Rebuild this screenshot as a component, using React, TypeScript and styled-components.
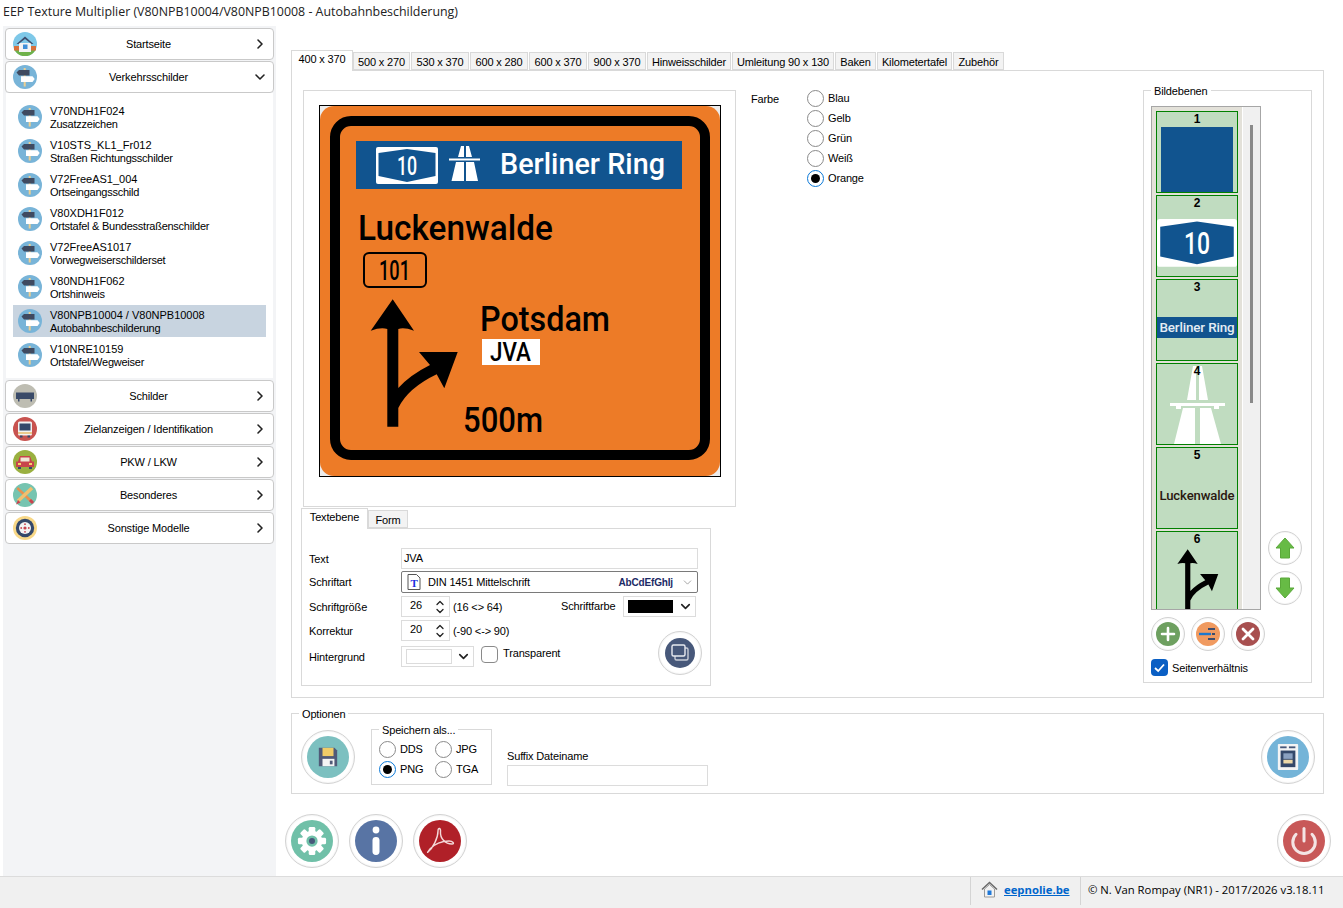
import React from 'react';
import styled, { createGlobalStyle } from 'styled-components';
import { ChevronDown, ChevronRight, ChevronUp, Power } from 'lucide-react';

const GlobalStyle = createGlobalStyle`
  html, body { margin: 0; padding: 0; background: #fff; }
  body { font-family: "Liberation Sans", Arial, sans-serif; font-size: 11px; letter-spacing: -0.15px; color: #000; }
  * { box-sizing: border-box; }
`;

const Page = styled.div`
  width: 1343px;
  height: 908px;
  display: flex;
  flex-direction: column;
  overflow: hidden;
  background: #fff;
`;

const TitleBar = styled.div`
  height: 26px;
  flex: none;
  padding: 4px 0 0 3px;
  font-family: "Open Sans", sans-serif;
  font-size: 12.4px;
  letter-spacing: 0;
  line-height: 16px;
  color: #222;
`;

const Body = styled.div`
  flex: 1;
  display: flex;
  min-height: 0;
  padding-left: 3px;
`;

const Sidebar = styled.aside`
  width: 273px;
  flex: none;
  background: #f3f4f6;
  padding: 2px;
  display: flex;
  flex-direction: column;
  gap: 1px;
`;

const NavButton = styled.div`
  height: 32px;
  flex: none;
  display: grid;
  grid-template-columns: 32px 1fr 21px;
  align-items: center;
  background: #fff;
  border: 1px solid #c9c9c9;
  border-radius: 4px;
  padding-left: 7px;
  text-align: center;
  svg { display: block; }
`;

const SubMenu = styled.div`
  margin: -1px 1px 1px;
  background: #fff;
  padding: 8px 7px 7px;
  display: flex;
  flex-direction: column;
  gap: 2px;
`;

const SubItem = styled.div<{ $active?: boolean }>`
  height: 32px;
  display: flex;
  align-items: center;
  gap: 8px;
  padding-left: 5px;
  line-height: 13px;
  background: ${(p) => (p.$active ? '#c8d4e0' : 'transparent')};
`;

const SubText = styled.div`
  padding-top: 2px;
`;

const SubCode = styled.div`
  letter-spacing: 0;
`;

const SubName = styled.div`
  letter-spacing: -0.25px;
`;

const Main = styled.main`
  flex: 1;
  min-width: 0;
  padding: 24px 19px 0 15px;
  display: flex;
  flex-direction: column;
`;

const TabRow = styled.div`
  display: flex;
  height: 20px;
  align-items: flex-end;
  position: relative;
  z-index: 1;
`;

const Tab = styled.div<{ $active?: boolean; $w: number }>`
  width: ${(p) => p.$w}px;
  height: ${(p) => (p.$active ? 21 : 18)}px;
  margin-bottom: ${(p) => (p.$active ? -1 : 0)}px;
  margin-right: ${(p) => (p.$active ? 0 : 1)}px;
  text-align: center;
  line-height: ${(p) => (p.$active ? 17 : 18)}px;
  background: ${(p) => (p.$active ? '#fff' : '#f3f3f3')};
  border: 1px solid #d9d9d9;
  border-bottom: ${(p) => (p.$active ? 'none' : '1px solid #d9d9d9')};
  flex: none;
`;

const TabPanel = styled.section`
  height: 628px;
  flex: none;
  border: 1px solid #d9d9d9;
  padding: 19px 11px 0 9px;
  display: flex;
`;

const LeftColumn = styled.div`
  width: 435px;
  flex: none;
`;

const ImagePanel = styled.div`
  width: 433px;
  height: 417px;
  margin-left: 2px;
  border: 1px solid #d9d9d9;
  padding: 14px 0 0 15px;
  svg { display: block; }
`;

const SubTabRow = styled(TabRow)`
  margin-top: 1px;
`;

const TextPanel = styled.div`
  width: 410px;
  height: 158px;
  border: 1px solid #d9d9d9;
  padding: 19px 0 0 7px;
  display: grid;
  grid-template-columns: 92px 160px 137px;
  grid-template-rows: 23px 25px 24px 26px 29px;
`;

const FieldLabel = styled.div`
  line-height: 23px;
  height: 21px;
`;

const WideField = styled.div`
  grid-column: 2 / 4;
`;

const TextInput = styled.div<{ $w?: number }>`
  width: ${(p) => (p.$w ? `${p.$w}px` : '100%')};
  height: 21px;
  border: 1px solid #dcdcdc;
  line-height: 19px;
  padding-left: 2px;
`;

const FontSelect = styled.div`
  height: 22px;
  border: 1px solid #7a7a7a;
  border-radius: 2px;
  display: flex;
  align-items: center;
  padding: 0 3px 0 5px;
  svg { flex: none; display: block; }
`;

const FontName = styled.span`
  margin-left: 7px;
  flex: 1;
`;

const FontPreview = styled.span`
  font-size: 10px;
  font-weight: bold;
  color: #1c2a66;
  margin-right: 8px;
`;

const FlexCell = styled.div`
  display: flex;
  align-items: flex-start;
`;

const Spin = styled.div`
  width: 49px;
  height: 21px;
  border: 1px solid #dcdcdc;
  display: flex;
  align-items: center;
  justify-content: space-between;
  padding: 0 3px 0 8px;
  margin-right: 3px;
`;

const SpinValue = styled.span`
  margin-top: -3px;
`;

const SpinArrows = styled.div`
  display: flex;
  flex-direction: column;
  margin-top: 1px;
  svg { display: block; margin: -2px 0; }
`;

const HintText = styled.span`
  line-height: 23px;
`;

const ColorLabel = styled.span`
  line-height: 21px;
`;

const ColorCell = styled(FlexCell)`
  justify-content: space-between;
  padding-right: 2px;
`;

const ColorSelect = styled.div<{ $w: number }>`
  width: ${(p) => p.$w}px;
  height: 21px;
  border: 1px solid #dcdcdc;
  display: flex;
  align-items: center;
  justify-content: space-between;
  padding: 0 2px 0 4px;
  flex: none;
  svg { display: block; }
`;

const Swatch = styled.span<{ $w: number; $color: string }>`
  width: ${(p) => p.$w}px;
  height: ${(p) => (p.$color === '#000' ? 13 : 15)}px;
  background: ${(p) => p.$color};
  border: 1px solid ${(p) => (p.$color === '#000' ? '#000' : '#dcdcdc')};
`;

const CheckBoxOff = styled.span`
  width: 17px;
  height: 17px;
  border: 1px solid #8a8a8a;
  border-radius: 4px;
  margin: 0 5px 0 7px;
  flex: none;
`;

const CheckText = styled.span`
  line-height: 15px;
`;

const ButtonCell = styled.div`
  grid-column: 3;
  grid-row: 4 / 6;
  align-self: end;
  justify-self: end;
  margin-right: -4px;
`;

const FarbeColumn = styled.div`
  margin-left: 15px;
  display: flex;
  flex: none;
`;

const FarbeLabel = styled.div`
  width: 56px;
  padding-top: 3px;
`;

const RadioStack = styled.div`
  display: flex;
  flex-direction: column;
  gap: 3px;
`;

const RadioRow = styled.label`
  display: flex;
  align-items: center;
  gap: 4px;
  height: 17px;
`;

const RadioText = styled.span`
  margin-top: -2px;
`;

const RadioDot = styled.span<{ $on?: boolean }>`
  width: 17px;
  height: 17px;
  border-radius: 50%;
  border: 1px solid ${(p) => (p.$on ? '#0a78d7' : '#8a8a8a')};
  display: flex;
  align-items: center;
  justify-content: center;
  flex: none;
  &::after {
    content: "";
    width: 9px;
    height: 9px;
    border-radius: 50%;
    background: ${(p) => (p.$on ? '#000' : 'transparent')};
  }
`;

const Fieldset = styled.fieldset`
  margin: 0;
  padding: 0 0 0 7px;
  border: 1px solid #d9d9d9;
  min-width: 0;
`;

const Legend = styled.legend`
  padding: 0 3px;
  height: 13px;
  line-height: 15px;
`;

const LayersBox = styled(Fieldset)`
  margin: -6px 0 0 auto;
  width: 169px;
  height: 599px;
  flex: none;
`;

const LayersTop = styled.div`
  display: flex;
  margin-top: 9px;
`;

const LayerList = styled.div`
  width: 110px;
  height: 504px;
  border: 1px solid #a6a6a6;
  display: flex;
  overflow: hidden;
  flex: none;
`;

const LayerStrip = styled.div`
  width: 90px;
  flex: none;
  background: #e3e1d9;
  padding: 4px 0 0 4px;
  display: flex;
  flex-direction: column;
  gap: 2px;
`;

const Track = styled.div`
  flex: 1;
  border-left: 1px solid #fff;
  background: #f0f0f0;
  display: flex;
  justify-content: center;
  padding-top: 18px;
`;

const Thumb = styled.div`
  width: 3px;
  height: 278px;
  background: #8a8a8a;
`;

const LayerCardBox = styled.div`
  width: 82px;
  height: 82px;
  flex: none;
  position: relative;
  border: 1px solid #008000;
  background: #c0dcc0;
  svg { display: block; }
`;

const LayerNumber = styled.span`
  position: absolute;
  top: 0;
  left: 0;
  right: 0;
  text-align: center;
  font-size: 12px;
  font-weight: bold;
  line-height: 14px;
`;

const MoveButtons = styled.div`
  margin: 0 0 5px 7px;
  display: flex;
  flex-direction: column;
  justify-content: flex-end;
  gap: 6px;
`;

const ToolRow = styled.div`
  display: flex;
  gap: 6px;
  margin-top: 7px;
`;

const AspectRow = styled.div`
  display: flex;
  align-items: center;
  gap: 4px;
  margin-top: 8px;
`;

const CheckBoxOn = styled.span`
  width: 17px;
  height: 17px;
  border-radius: 4px;
  background: #0a5fc4;
  display: flex;
  align-items: center;
  justify-content: center;
`;

const OptionsBox = styled(Fieldset)`
  height: 87px;
  margin-top: 9px;
  flex: none;
`;

const OptionsRow = styled.div`
  display: flex;
  padding: 10px 8px 0 2px;
  align-items: flex-start;
`;

const SaveAsBox = styled(Fieldset)`
  width: 121px;
  height: 62px;
  margin: -7px 0 0 16px;
  flex: none;
`;

const SaveGrid = styled.div`
  display: grid;
  grid-template-columns: 56px 56px;
  row-gap: 3px;
  padding-top: 5px;
`;

const SuffixBlock = styled.div`
  margin: 20px 0 0 15px;
  line-height: 13px;
`;

const SuffixInput = styled(TextInput)`
  margin-top: 2px;
`;

const PushRight = styled.div`
  margin-left: auto;
`;

const ActionRow = styled.div`
  display: flex;
  gap: 10px;
  margin: 20px -7px 0 -6px;
`;

const StatusBar = styled.footer`
  height: 32px;
  flex: none;
  background: #f0f0f0;
  border-top: 1px solid #dcdcdc;
  display: flex;
  justify-content: flex-end;
  font-family: "Open Sans", sans-serif;
  font-size: 11.3px;
  letter-spacing: 0;
`;

const StatusCell = styled.div<{ $w: number; $pad: number }>`
  width: ${(p) => p.$w}px;
  height: 28px;
  border-left: 1px solid #d4d4d4;
  display: flex;
  align-items: center;
  gap: 6px;
  padding: 0 0 4px ${(p) => p.$pad}px;
  white-space: nowrap;
  svg { display: block; flex: none; }
`;

const StatusLink = styled.a`
  color: #0066cc;
  font-weight: bold;
  text-decoration: underline;
`;

const RoundShell = styled.div<{ $size: number; $inset: number; $color: string }>`
  width: ${(p) => p.$size}px;
  height: ${(p) => p.$size}px;
  flex: none;
  border-radius: 50%;
  border: 1px solid #d2d2d2;
  background: #fff;
  box-shadow: inset 0 0 2px #e4e4e4;
  padding: ${(p) => p.$inset}px;
  > div {
    width: 100%;
    height: 100%;
    border-radius: 50%;
    background: ${(p) => p.$color};
    display: flex;
    align-items: center;
    justify-content: center;
  }
  svg { display: block; }
`;

type RoundProps = { size: number; inset: number; color: string; children: React.ReactNode };

const RoundButton = ({ size, inset, color, children }: RoundProps) => (
  <RoundShell $size={size} $inset={inset} $color={color}>
    <div>{children}</div>
  </RoundShell>
);

const Signpost = () => (
  <svg width="24" height="24" viewBox="0 0 24 24">
    <circle cx="12" cy="12" r="12" fill="#78b4d8" />
    <rect x="10.7" y="3" width="2" height="18.5" fill="#eccf92" />
    <path d="M3.5 7.5 L6 5 H16.5 V10.5 H6 Z" fill="#3f4a60" />
    <path d="M8 11.3 H19.5 L21.7 14 L19.5 17 H8 Z" fill="#fff" />
  </svg>
);

const HomeIcon = () => (
  <svg width="24" height="24" viewBox="0 0 24 24">
    <circle cx="12" cy="12" r="12" fill="#7ec8e8" />
    <path d="M1.5 18 H22.5 A12 12 0 0 1 1.5 18 Z" fill="#6fb24a" />
    <rect x="1" y="14" width="22" height="4.5" fill="#d8703c" />
    <rect x="6" y="11" width="12" height="9" fill="#f4f4f4" />
    <path d="M3.5 12 L12 4.5 L20.5 12 L18.5 12 L12 7 L5.5 12 Z" fill="#3d4c6c" />
    <rect x="10" y="12.5" width="4.5" height="4.5" fill="#3f8fd8" />
  </svg>
);

const BoardIcon = () => (
  <svg width="24" height="24" viewBox="0 0 24 24">
    <circle cx="12" cy="12" r="12" fill="#bebdb2" />
    <rect x="3" y="8.5" width="18" height="6.5" fill="#3a4a68" />
    <rect x="5" y="15" width="1.5" height="2.5" fill="#3a4a68" />
    <rect x="17.5" y="15" width="1.5" height="2.5" fill="#3a4a68" />
  </svg>
);

const DisplayIcon = () => (
  <svg width="24" height="24" viewBox="0 0 24 24">
    <circle cx="12" cy="12" r="12" fill="#c85350" />
    <rect x="5" y="4.5" width="14" height="14" rx="1.5" fill="#f2f2f2" />
    <rect x="6.5" y="6.5" width="11" height="7" fill="#34486a" />
    <rect x="5" y="15" width="14" height="2" fill="#ecc98c" />
    <rect x="7" y="18.5" width="2.5" height="2" fill="#34486a" />
    <rect x="14.5" y="18.5" width="2.5" height="2" fill="#34486a" />
  </svg>
);

const CarIcon = () => (
  <svg width="24" height="24" viewBox="0 0 24 24">
    <circle cx="12" cy="12" r="12" fill="#9ab040" />
    <path d="M7 6 H17 L19 11.5 H21 V17 H3 V11.5 H5 Z" fill="#c8444c" />
    <rect x="7.5" y="7.5" width="9" height="4" fill="#f0e8d8" />
    <rect x="5" y="13" width="3" height="2" fill="#f4d468" />
    <rect x="16" y="13" width="3" height="2" fill="#f4d468" />
    <rect x="5" y="17" width="3" height="2" fill="#34486a" />
    <rect x="16" y="17" width="3" height="2" fill="#34486a" />
  </svg>
);

const ToolsIcon = () => (
  <svg width="24" height="24" viewBox="0 0 24 24">
    <circle cx="12" cy="12" r="12" fill="#76c4b0" />
    <path d="M5 4 L20 18 L18 20 L3.5 6 Z" fill="#e89050" />
    <path d="M19 5 L5 18" stroke="#f0c070" strokeWidth="3.5" />
    <path d="M5 17 L7.5 19.5 L3 21.5 Z" fill="#c84450" />
    <path d="M17 17 L20 20" stroke="#c84450" strokeWidth="3" />
  </svg>
);

const WheelIcon = () => (
  <svg width="24" height="24" viewBox="0 0 24 24">
    <circle cx="12" cy="12" r="12" fill="#f8d888" />
    <circle cx="12" cy="12" r="9.2" fill="#34486a" />
    <circle cx="12" cy="12" r="6" fill="#f4f4f4" />
    <circle cx="12" cy="12" r="1.6" fill="#c84450" />
    <circle cx="12" cy="8.2" r="0.9" fill="#c84450" />
    <circle cx="12" cy="15.8" r="0.9" fill="#c84450" />
    <circle cx="8.2" cy="12" r="0.9" fill="#c84450" />
    <circle cx="15.8" cy="12" r="0.9" fill="#c84450" />
  </svg>
);

const FontFileIcon = () => (
  <svg width="14" height="16" viewBox="0 0 14 16">
    <path d="M1 .5 H9.5 L13 4 V15.5 H1 Z" fill="#fff" stroke="#555" />
    <text x="7" y="12.5" textAnchor="middle" fontFamily="Liberation Serif, serif" fontWeight="bold" fontSize="11" fill="#1a2ee0">T</text>
  </svg>
);

const ARROW_PATH =
  'M392.7 299.3 L414 330.7 Q404 327 398.3 329 L398.3 388 Q410 375 430 365 L419 352 L457.7 352 L444.3 388.3 L436.7 374.3 Q408 388 398.3 408 L398.3 426.7 L387.3 426.7 L387.3 329 Q381 327 370.7 330.7 Z';

const Shield = () => (
  <g>
    <rect x="376" y="147" width="62" height="37" rx="2" fill="#fff" />
    <path d="M378.5 153 L407 149 L435.5 153 V176 L407 182 L378.5 176 Z" fill="#11548f" />
    <text x="407" y="174.5" textAnchor="middle" fontFamily="Roboto, sans-serif" fontWeight="500" fontSize="25" fill="#fff" textLength="20" lengthAdjust="spacingAndGlyphs">10</text>
  </g>
);

const SignText = styled.text`
  font-family: Roboto, "Liberation Sans", sans-serif;
  font-weight: 500;
  letter-spacing: 0;
`;

const SignImage = () => (
  <svg width="402" height="372" viewBox="319 105 402 372">
    <rect x="319" y="105" width="402" height="372" fill="#ececec" />
    <rect x="320" y="106" width="400" height="370" rx="14" fill="#ed7b27" />
    <rect x="335" y="121" width="370" height="334" rx="16" fill="none" stroke="#000" strokeWidth="10" />
    <rect x="356" y="141" width="326" height="48" fill="#11548f" />
    <Shield />
    <g fill="#fff">
      <path d="M461 146 H464 V157 H458 Z M466 146 H469 L472 157 H466 Z" />
      <rect x="449" y="158.5" width="31" height="2" />
      <path d="M456 162 H464 V181 H451.5 Z M466 162 H474 L478 181 H466 Z" />
    </g>
    <SignText x="500" y="174" fontSize="30" fill="#fff" textLength="165" lengthAdjust="spacingAndGlyphs">Berliner Ring</SignText>
    <SignText x="358" y="239.5" fontSize="35" textLength="195" lengthAdjust="spacingAndGlyphs">Luckenwalde</SignText>
    <rect x="364" y="253" width="62" height="34" rx="5" fill="none" stroke="#000" strokeWidth="2" />
    <SignText x="379" y="279.5" fontSize="27" textLength="31" lengthAdjust="spacingAndGlyphs">101</SignText>
    <path d={ARROW_PATH} fill="#000" />
    <SignText x="480" y="330.7" fontSize="35" textLength="130" lengthAdjust="spacingAndGlyphs">Potsdam</SignText>
    <rect x="482" y="339" width="58" height="26" fill="#fff" />
    <SignText x="490" y="361" fontSize="26" textLength="41" lengthAdjust="spacingAndGlyphs">JVA</SignText>
    <SignText x="463" y="431.7" fontSize="35" textLength="80" lengthAdjust="spacingAndGlyphs">500m</SignText>
    <rect x="319.5" y="105.5" width="401" height="371" fill="none" stroke="#000" />
  </svg>
);

const Thumbnail = ({ children }: { children: React.ReactNode }) => (
  <svg width="80" height="80" viewBox="0 0 80 80">{children}</svg>
);

const layers: React.ReactNode[] = [
  <rect key="a" x="4" y="15" width="72" height="65" fill="#11548f" />,
  <g key="b" transform="translate(0 23) scale(1.29) translate(-376 -147)"><Shield /></g>,
  <g key="c">
    <rect x="0" y="37" width="80" height="21" fill="#11548f" />
    <text x="40" y="52" textAnchor="middle" fontFamily="Roboto, sans-serif" fontWeight="500" fontSize="13" fill="#e4ecf4" textLength="75" lengthAdjust="spacingAndGlyphs">Berliner Ring</text>
  </g>,
  <g key="d" fill="#fff">
    <path d="M36 2 H39 V36 H30 Z M42 2 H45 L51 36 H42 Z" />
    <rect x="13" y="39" width="55" height="3" />
    <path d="M19 42 H24 V45 H19 Z M57 42 H62 V45 H57 Z" />
    <path d="M26 44 H38 V80 H17 Z M43 44 H54 L64 80 H43 Z" />
  </g>,
  <text key="e" x="40" y="52" textAnchor="middle" fontFamily="Roboto, sans-serif" fontWeight="500" fontSize="13" fill="#2a1810" textLength="75" lengthAdjust="spacingAndGlyphs">Luckenwalde</text>,
  <path key="f" d={ARROW_PATH} fill="#000" transform="translate(30.7 17.3) scale(.47) translate(-392.7 -299.3)" />,
];

const navTop = ['Startseite', 'Verkehrsschilder'];

const subItems = [
  ['V70NDH1F024', 'Zusatzzeichen'],
  ['V10STS_KL1_Fr012', 'Straßen Richtungsschilder'],
  ['V72FreeAS1_004', 'Ortseingangsschild'],
  ['V80XDH1F012', 'Ortstafel & Bundesstraßenschilder'],
  ['V72FreeAS1017', 'Vorwegweiserschilderset'],
  ['V80NDH1F062', 'Ortshinweis'],
  ['V80NPB10004 / V80NPB10008', 'Autobahnbeschilderung'],
  ['V10NRE10159', 'Ortstafel/Wegweiser'],
];

const navBottom: [string, React.ReactNode][] = [
  ['Schilder', <BoardIcon key="b" />],
  ['Zielanzeigen / Identifikation', <DisplayIcon key="d" />],
  ['PKW / LKW', <CarIcon key="c" />],
  ['Besonderes', <ToolsIcon key="t" />],
  ['Sonstige Modelle', <WheelIcon key="w" />],
];

const sizeTabs: [string, number][] = [
  ['400 x 370', 62],
  ['500 x 270', 57],
  ['530 x 370', 58],
  ['600 x 280', 58],
  ['600 x 370', 58],
  ['900 x 370', 58],
  ['Hinweisschilder', 84],
  ['Umleitung 90 x 130', 102],
  ['Baken', 41],
  ['Kilometertafel', 75],
  ['Zubehör', 51],
];

const colours = ['Blau', 'Gelb', 'Grün', 'Weiß', 'Orange'];
const formats = ['DDS', 'JPG', 'PNG', 'TGA'];

const Chevron = () => <ChevronRight size={16} strokeWidth={2.4} color="#222" />;

const SpinBox = ({ value }: { value: number }) => (
  <Spin>
    <SpinValue>{value}</SpinValue>
    <SpinArrows>
      <ChevronUp size={12} strokeWidth={2.6} color="#222" />
      <ChevronDown size={12} strokeWidth={2.6} color="#222" />
    </SpinArrows>
  </Spin>
);

export default function App() {
  return (
    <Page>
      <GlobalStyle />
      <TitleBar>EEP Texture Multiplier (V80NPB10004/V80NPB10008 - Autobahnbeschilderung)</TitleBar>
      <Body>
        <Sidebar>
          {navTop.map((label, i) => (
            <NavButton key={label}>
              {i === 0 ? <HomeIcon /> : <Signpost />}
              <span>{label}</span>
              {i === 0 ? <Chevron /> : <ChevronDown size={16} strokeWidth={2.4} color="#222" />}
            </NavButton>
          ))}
          <SubMenu>
            {subItems.map(([code, name], i) => (
              <SubItem key={code} $active={i === 6}>
                <Signpost />
                <SubText>
                  <SubCode>{code}</SubCode>
                  <SubName>{name}</SubName>
                </SubText>
              </SubItem>
            ))}
          </SubMenu>
          {navBottom.map(([label, icon]) => (
            <NavButton key={label}>
              {icon}
              <span>{label}</span>
              <Chevron />
            </NavButton>
          ))}
        </Sidebar>
        <Main>
          <TabRow>
            {sizeTabs.map(([label, w], i) => (
              <Tab key={label} $w={w} $active={i === 0}>{label}</Tab>
            ))}
          </TabRow>
          <TabPanel>
            <LeftColumn>
              <ImagePanel>
                <SignImage />
              </ImagePanel>
              <SubTabRow>
                <Tab $w={67} $active>Textebene</Tab>
                <Tab $w={40}>Form</Tab>
              </SubTabRow>
              <TextPanel>
                <FieldLabel>Text</FieldLabel>
                <WideField><TextInput>JVA</TextInput></WideField>
                <FieldLabel>Schriftart</FieldLabel>
                <WideField>
                  <FontSelect>
                    <FontFileIcon />
                    <FontName>DIN 1451 Mittelschrift</FontName>
                    <FontPreview>AbCdEfGhIj</FontPreview>
                    <ChevronDown size={13} strokeWidth={1.2} color="#777" />
                  </FontSelect>
                </WideField>
                <FieldLabel>Schriftgröße</FieldLabel>
                <FlexCell>
                  <SpinBox value={26} />
                  <HintText>(16 &lt;&gt; 64)</HintText>
                </FlexCell>
                <ColorCell>
                  <ColorLabel>Schriftfarbe</ColorLabel>
                  <ColorSelect $w={73}>
                    <Swatch $w={45} $color="#000" />
                    <ChevronDown size={15} strokeWidth={2.6} color="#222" />
                  </ColorSelect>
                </ColorCell>
                <FieldLabel>Korrektur</FieldLabel>
                <FlexCell>
                  <SpinBox value={20} />
                  <HintText>(-90 &lt;-&gt; 90)</HintText>
                </FlexCell>
                <FieldLabel>Hintergrund</FieldLabel>
                <FlexCell>
                  <ColorSelect $w={73}>
                    <Swatch $w={46} $color="#fff" />
                    <ChevronDown size={15} strokeWidth={2.6} color="#222" />
                  </ColorSelect>
                  <CheckBoxOff />
                  <CheckText>Transparent</CheckText>
                </FlexCell>
                <ButtonCell>
                  <RoundButton size={44} inset={6} color="#47587a">
                    <svg width="22" height="22" viewBox="0 0 22 22" fill="none">
                      <rect x="6" y="6" width="13" height="12" rx="1.5" fill="#47587a" stroke="#c8ccd6" strokeWidth="1.4" />
                      <rect x="3" y="3" width="13" height="11" rx="1.5" fill="#47587a" stroke="#e8eaf0" strokeWidth="1.4" />
                    </svg>
                  </RoundButton>
                </ButtonCell>
              </TextPanel>
            </LeftColumn>
            <FarbeColumn>
              <FarbeLabel>Farbe</FarbeLabel>
              <RadioStack>
                {colours.map((c) => (
                  <RadioRow key={c}>
                    <RadioDot $on={c === 'Orange'} />
                    <RadioText>{c}</RadioText>
                  </RadioRow>
                ))}
              </RadioStack>
            </FarbeColumn>
            <LayersBox>
              <Legend>Bildebenen</Legend>
              <LayersTop>
                <LayerList>
                  <LayerStrip>
                    {layers.map((layer, i) => (
                      <LayerCardBox key={i}>
                        <Thumbnail>{layer}</Thumbnail>
                        <LayerNumber>{i + 1}</LayerNumber>
                      </LayerCardBox>
                    ))}
                  </LayerStrip>
                  <Track><Thumb /></Track>
                </LayerList>
                <MoveButtons>
                  <RoundButton size={34} inset={1} color="#fff">
                    <svg width="22" height="24" viewBox="0 0 22 24">
                      <path d="M11 2 L20 12 H15.5 V22 H6.5 V12 H2 Z" fill="#67bb45" stroke="#5aa83a" />
                    </svg>
                  </RoundButton>
                  <RoundButton size={34} inset={1} color="#fff">
                    <svg width="22" height="24" viewBox="0 0 22 24">
                      <path d="M11 22 L20 12 H15.5 V2 H6.5 V12 H2 Z" fill="#67bb45" stroke="#5aa83a" />
                    </svg>
                  </RoundButton>
                </MoveButtons>
              </LayersTop>
              <ToolRow>
                <RoundButton size={34} inset={4} color="#6ea060">
                  <svg width="16" height="16" viewBox="0 0 16 16">
                    <path d="M8 2 V14 M2 8 H14" stroke="#fff" strokeWidth="2.6" strokeLinecap="round" />
                  </svg>
                </RoundButton>
                <RoundButton size={34} inset={4} color="#f09a60">
                  <svg width="20" height="16" viewBox="0 0 20 16">
                    <path d="M10 3 H17 M10 13 H17" stroke="#3d4c6c" strokeWidth="2" />
                    <path d="M1 8 H13" stroke="#1a78d0" strokeWidth="2.4" />
                    <path d="M14 8 H17" stroke="#3d4c6c" strokeWidth="2" />
                  </svg>
                </RoundButton>
                <RoundButton size={34} inset={4} color="#a85050">
                  <svg width="16" height="16" viewBox="0 0 16 16">
                    <path d="M3 3 L13 13 M13 3 L3 13" stroke="#fff" strokeWidth="2.8" strokeLinecap="round" />
                  </svg>
                </RoundButton>
              </ToolRow>
              <AspectRow>
                <CheckBoxOn>
                  <svg width="13" height="13" viewBox="0 0 13 13" fill="none">
                    <path d="M2 7 L5.2 10 L11 3.5" stroke="#fff" strokeWidth="1.8" />
                  </svg>
                </CheckBoxOn>
                Seitenverhältnis
              </AspectRow>
            </LayersBox>
          </TabPanel>
          <OptionsBox>
            <Legend>Optionen</Legend>
            <OptionsRow>
              <RoundButton size={54} inset={5} color="#7cc0c0">
                <svg width="22" height="22" viewBox="0 0 24 24">
                  <path d="M2 2 H19 L22 5 V22 H2 Z" fill="#505a78" />
                  <rect x="6" y="2" width="12" height="9" fill="#f0cc68" />
                  <rect x="6" y="14" width="13" height="8" fill="#f4f4f4" />
                  <rect x="14" y="16" width="3" height="4" fill="#505a78" />
                </svg>
              </RoundButton>
              <SaveAsBox>
                <Legend>Speichern als...</Legend>
                <SaveGrid>
                  {formats.map((f) => (
                    <RadioRow key={f}>
                      <RadioDot $on={f === 'PNG'} />
                      <RadioText>{f}</RadioText>
                    </RadioRow>
                  ))}
                </SaveGrid>
              </SaveAsBox>
              <SuffixBlock>
                Suffix Dateiname
                <SuffixInput $w={201} />
              </SuffixBlock>
              <PushRight>
                <RoundButton size={54} inset={5} color="#74b4d8">
                  <svg width="24" height="28" viewBox="0 0 26 30">
                    <rect x="2" y="1" width="22" height="28" rx="1" fill="#f4f4f4" />
                    <rect x="4.5" y="3.5" width="7" height="2" fill="#47587a" />
                    <rect x="14" y="3.5" width="7" height="2" fill="#47587a" />
                    <rect x="5" y="8" width="16" height="18" fill="#34486a" />
                    <rect x="8" y="11" width="10" height="6" fill="#8aa0c0" />
                    <rect x="8" y="18" width="10" height="4" fill="#ecd8a8" />
                  </svg>
                </RoundButton>
              </PushRight>
            </OptionsRow>
          </OptionsBox>
          <ActionRow>
            <RoundButton size={54} inset={5} color="#70c0a8">
              <svg width="30" height="30" viewBox="0 0 32 32">
                <g fill="#fff">
                  {[0, 45, 90, 135, 180, 225, 270, 315].map((a) => (
                    <rect key={a} x="12.5" y="1" width="7" height="8" rx="1.5" transform={`rotate(${a} 16 16)`} />
                  ))}
                  <circle cx="16" cy="16" r="11" />
                </g>
                <circle cx="16" cy="16" r="6" fill="#70c0a8" />
                <circle cx="16" cy="16" r="3.2" fill="#47587a" />
              </svg>
            </RoundButton>
            <RoundButton size={54} inset={5} color="#5874a4">
              <svg width="10" height="30" viewBox="0 0 10 30">
                <circle cx="5" cy="4" r="3.4" fill="#fff" />
                <rect x="1.5" y="11" width="7" height="18" rx="3.4" fill="#fff" />
              </svg>
            </RoundButton>
            <RoundButton size={54} inset={5} color="#b02028">
              <svg width="30" height="30" viewBox="0 0 30 30" fill="none">
                <path d="M3 26 C8 22 13 12 13 5 C13 1 16 2 15.5 6 C15 12 20 18 27 18 C30 18 28 15 24 15 C17 15 9 18 5 23 C3 26 2 27 3 26 Z" stroke="#f4d8d8" strokeWidth="1.4" />
              </svg>
            </RoundButton>
            <PushRight>
              <RoundButton size={54} inset={5} color="#c85858">
                <Power size={30} strokeWidth={2.4} color="#f4e4e4" />
              </RoundButton>
            </PushRight>
          </ActionRow>
        </Main>
      </Body>
      <StatusBar>
        <StatusCell $w={110} $pad={10}>
          <svg width="17" height="17" viewBox="0 0 17 17">
            <path d="M1 8.5 L8.5 1.5 L16 8.5" fill="none" stroke="#6a6a6a" strokeWidth="1.6" />
            <path d="M3.5 8 L8.5 3.5 L13.5 8 V16 H3.5 Z" fill="#f2f2f2" stroke="#9a9a9a" />
            <rect x="6.5" y="9.5" width="4" height="4.5" fill="#1f78d8" />
          </svg>
          <StatusLink>eepnolie.be</StatusLink>
        </StatusCell>
        <StatusCell $w={263} $pad={7}>© N. Van Rompay (NR1) - 2017/2026 v3.18.11</StatusCell>
      </StatusBar>
    </Page>
  );
}
